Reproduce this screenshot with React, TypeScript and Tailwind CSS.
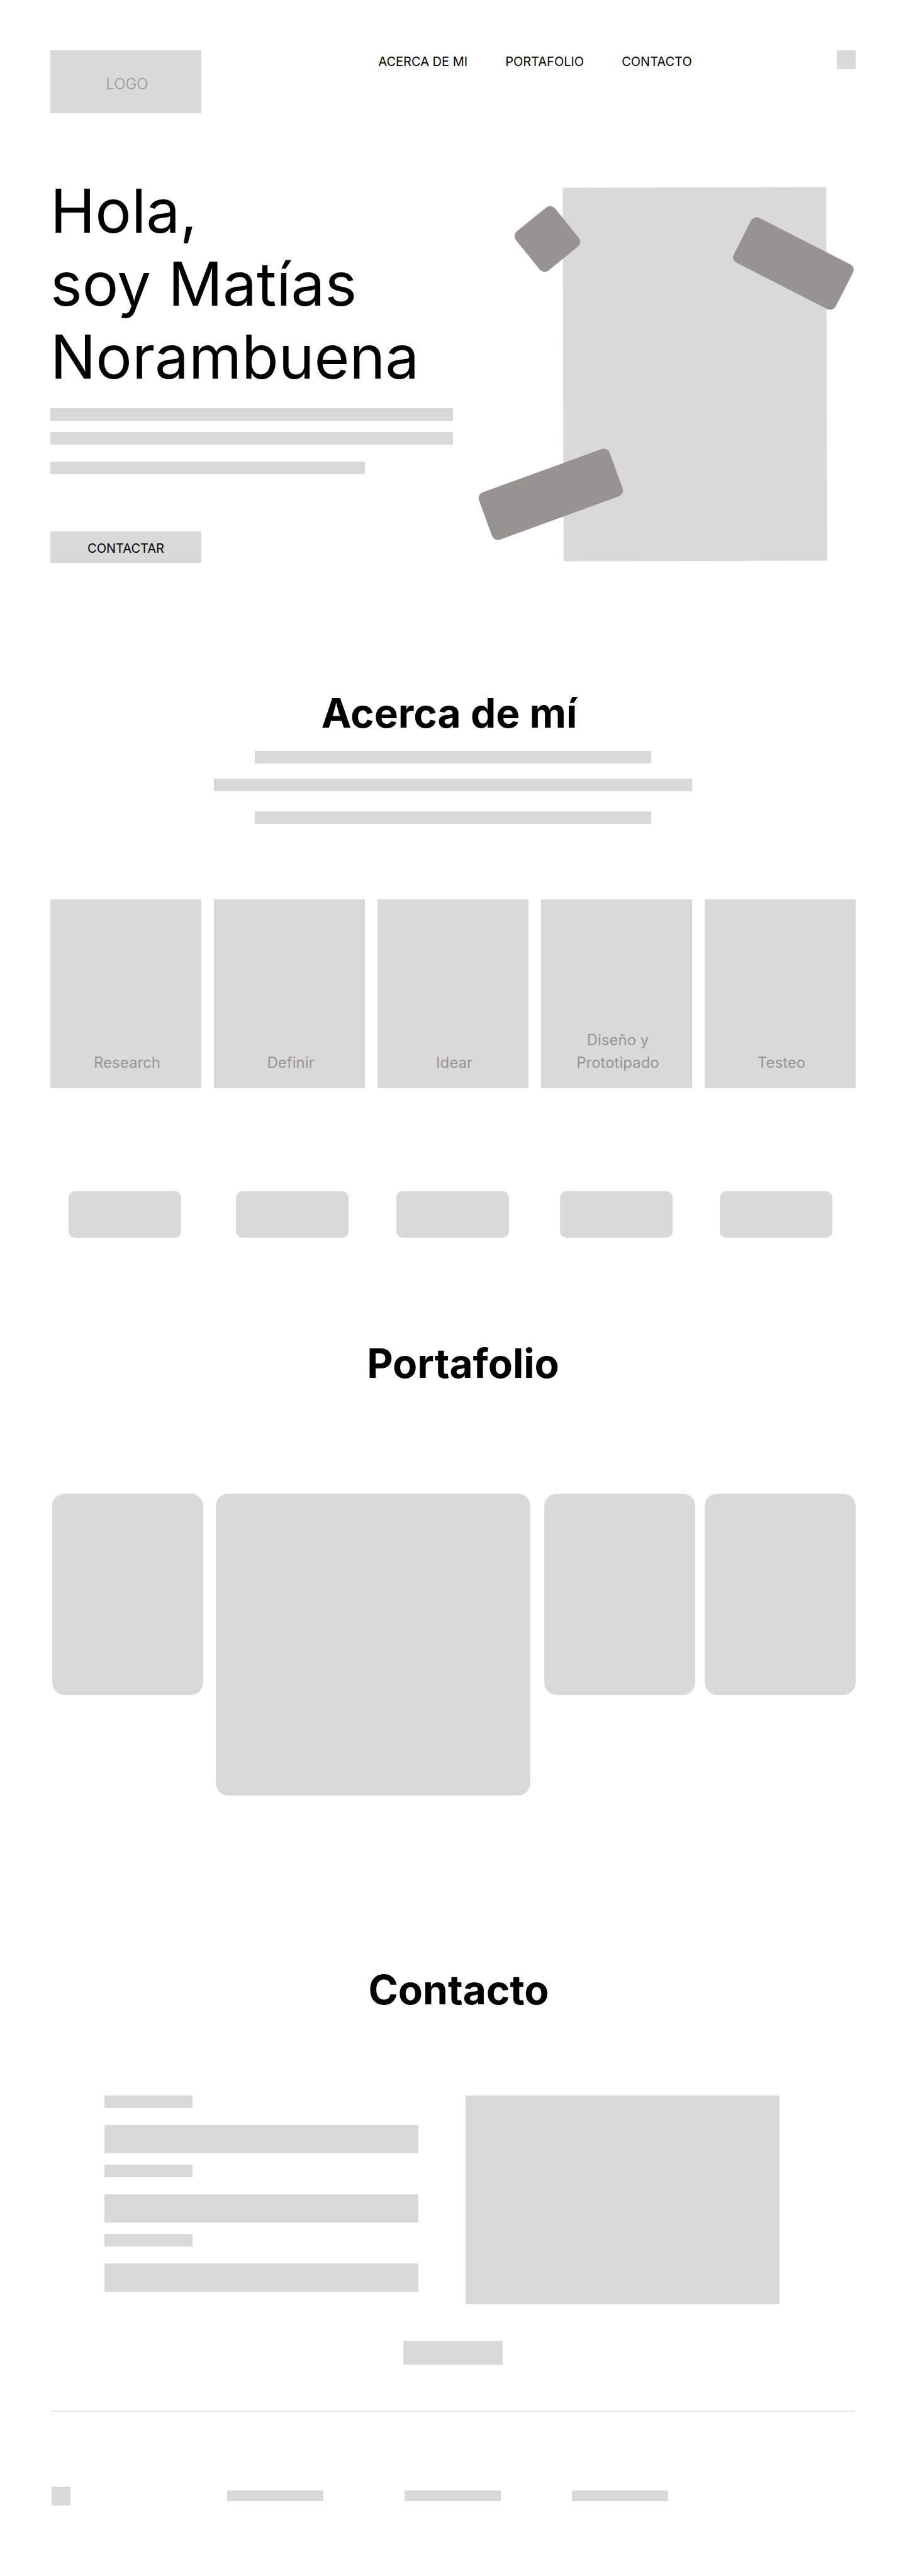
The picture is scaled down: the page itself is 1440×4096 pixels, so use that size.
const navLinks = [
  { label: "ACERCA DE MI", href: "#acerca" },
  { label: "PORTAFOLIO", href: "#portafolio" },
  { label: "CONTACTO", href: "#contacto" },
];

const steps = [["Research"], ["Definir"], ["Idear"], ["Diseño y", "Prototipado"], ["Testeo"]];

const skillColumns = ["col-start-1", "col-start-3", "col-start-5", "col-start-7", "col-start-9"];

const fields = [
  { id: "nombre", name: "Nombre", type: "text" },
  { id: "correo", name: "Correo", type: "email" },
  { id: "mensaje", name: "Mensaje", type: "text" },
];

const footerLinks = [
  { label: "Acerca de mí", href: "#acerca", column: "col-start-3" },
  { label: "Portafolio", href: "#portafolio", column: "col-start-5" },
  { label: "Contacto", href: "#contacto", column: "col-start-7" },
];

function Header() {
  return (
    <header className="grid grid-cols-[240px_281fr_auto_230fr_30px] items-start px-20 pt-20">
      <a
        href="#inicio"
        className="flex h-[100px] items-center justify-center bg-[#d9d9d9] pt-1.5 pl-1 text-2xl leading-[29px] font-light text-[#999292]"
      >
        LOGO
      </a>
      <nav className="col-start-3 mt-1.5 flex gap-[60px] text-xl leading-6">
        {navLinks.map((link) => (
          <a key={link.href} href={link.href} className="whitespace-nowrap">
            {link.label}
          </a>
        ))}
      </nav>
      <button type="button" aria-label="Menú" className="col-start-5 size-[30px] bg-[#d9d9d9]" />
    </header>
  );
}

function Hero() {
  return (
    <section id="inicio" className="mt-[97px] flex items-start justify-between pr-[126px] pl-20">
      <div className="w-[640px]">
        <h1 className="text-8xl leading-[116px]">
          Hola,
          <br />
          soy Matías
          <br />
          Norambuena
        </h1>
        <div className="mt-6 h-5 bg-[#d9d9d9]" />
        <div className="mt-[18px] h-5 bg-[#d9d9d9]" />
        <div className="mt-[27px] h-5 w-[500px] bg-[#d9d9d9]" />
        <button type="button" className="mt-[91px] h-[50px] w-60 bg-[#d9d9d9] pt-1 text-xl leading-6">
          CONTACTAR
        </button>
      </div>
      <div className="relative mt-[21px] h-[594px] w-[419px]">
        <div className="h-full w-full rotate-[-0.14deg] bg-[#d9d9d9]" />
        <div className="absolute top-[42px] -left-[65px] size-20 rotate-[-39deg] rounded-[10px] bg-[#999292]" />
        <div className="absolute top-[81px] left-[275px] h-20 w-[182px] rotate-[27deg] rounded-[10px] bg-[#999292]" />
        <div className="absolute top-[448px] -left-[130px] h-20 w-[221px] rotate-[-20deg] rounded-[10px] bg-[#999292]" />
      </div>
    </section>
  );
}

function About() {
  return (
    <section id="acerca" className="mt-[200px] px-20">
      <h2 className="pr-3 text-center text-[64px] leading-[77px] font-bold">Acerca de mí</h2>
      <div className="mx-auto mt-[22px] h-5 w-[630px] bg-[#d9d9d9]" />
      <div className="mx-auto mt-6 h-5 w-[760px] bg-[#d9d9d9]" />
      <div className="mx-auto mt-8 h-5 w-[630px] bg-[#d9d9d9]" />
      <ul className="mt-[120px] grid grid-cols-5 gap-5">
        {steps.map((lines) => (
          <li
            key={lines[0]}
            className="flex h-[300px] flex-col justify-end bg-[#d9d9d9] pb-[22px] pl-1 text-center text-2xl leading-9 text-[#999292]"
          >
            {lines.map((line) => (
              <span key={line}>{line}</span>
            ))}
          </li>
        ))}
      </ul>
      <div className="mt-[164px] grid grid-cols-[179fr_87fr_179fr_76fr_179fr_81fr_179fr_75fr_179fr] pr-[37px] pl-[29px]">
        {skillColumns.map((column) => (
          <div key={column} className={`${column} h-[74px] rounded-[10px] bg-[#d9d9d9]`} />
        ))}
      </div>
    </section>
  );
}

function Portfolio() {
  return (
    <section id="portafolio" className="mt-[161px]">
      <h2 className="pl-8 text-center text-[64px] leading-[77px] font-bold">Portafolio</h2>
      <div className="mt-[169px] grid grid-cols-[240fr_500fr_497fr] items-start gap-5 pr-20 pl-[83px]">
        <div className="h-80 rounded-[20px] bg-[#d9d9d9]" />
        <div className="h-[480px] rounded-[20px] bg-[#d9d9d9]" />
        <div className="grid grid-cols-2 gap-[15px] pl-0.5">
          <div className="h-80 rounded-[20px] bg-[#d9d9d9]" />
          <div className="h-80 rounded-[20px] bg-[#d9d9d9]" />
        </div>
      </div>
    </section>
  );
}

function Contact() {
  return (
    <section id="contacto" className="mt-[270px]">
      <h2 className="pl-[18px] text-center text-[64px] leading-[77px] font-bold">Contacto</h2>
      <form className="mt-[130px]">
        <div className="grid grid-cols-2 gap-[75px] pr-[201px] pl-[166px]">
          <div className="flex flex-col gap-[18px]">
            {fields.map((field) => (
              <div key={field.id}>
                <label htmlFor={field.id} className="block h-5 w-[140px] bg-[#d9d9d9]" />
                <input
                  id={field.id}
                  type={field.type}
                  aria-label={field.name}
                  className="mt-[27px] block h-[45px] w-full bg-[#d9d9d9] px-4 text-xl"
                />
              </div>
            ))}
          </div>
          <div className="h-[332px] bg-[#d9d9d9]" />
        </div>
        <button type="submit" aria-label="Enviar" className="mx-auto mt-[58px] block h-[38px] w-[158px] bg-[#d9d9d9]" />
      </form>
    </section>
  );
}

function Footer() {
  return (
    <footer className="mt-[73px] px-[82px] pb-28">
      <hr className="border-t-2 border-[#e5e5e5]" />
      <div className="mt-[119px] grid grid-cols-[30px_249fr_153px_129fr_153px_113fr_153px_296fr]">
        <a href="#inicio" aria-label="Inicio" className="size-[30px] bg-[#d9d9d9]" />
        {footerLinks.map((link) => (
          <a
            key={link.href}
            href={link.href}
            aria-label={link.label}
            className={`${link.column} mt-1.5 h-[17px] bg-[#d9d9d9]`}
          />
        ))}
      </div>
    </footer>
  );
}

export default function App() {
  return (
    <div className="min-h-screen bg-white font-['Inter',sans-serif] text-black">
      <Header />
      <main>
        <Hero />
        <About />
        <Portfolio />
        <Contact />
      </main>
      <Footer />
    </div>
  );
}
